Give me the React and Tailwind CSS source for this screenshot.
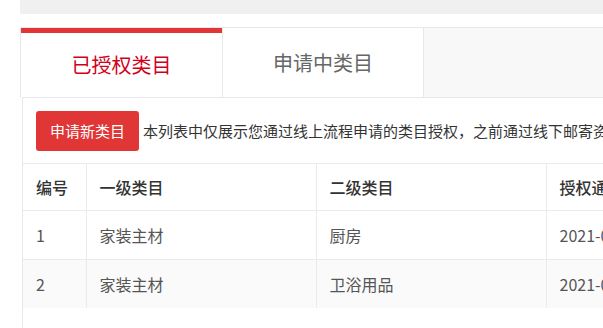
export default function App() {
  const rows = [
    { id: 1, first: '家装主材', second: '厨房', date: '2021-06-18 10:22:31' },
    { id: 2, first: '家装主材', second: '卫浴用品', date: '2021-06-18 10:22:31' },
  ]

  return (
    <div
      className="w-[603px] h-[328px] bg-white overflow-hidden"
      style={{ fontFamily: '"Noto Sans CJK SC", "Noto Sans", sans-serif' }}
    >
      {/* top strip */}
      <div className="ml-[20px] h-[14px] bg-[#f0f0f0]"></div>

      {/* tabs */}
      <div className="ml-[20px] mt-[13px] h-[70px] flex border-t border-l border-[#e8e8e8]">
        <div className="w-[201px] shrink-0 bg-white border-t-[5px] border-[#e23535] flex items-center justify-center text-[20px] text-[#d0021b]">
          已授权类目
        </div>
        <div className="w-[201px] shrink-0 bg-white border-l border-[#e8e8e8] flex items-center justify-center text-[20px] text-[#666]">
          申请中类目
        </div>
        <div className="flex-1 bg-[#f8f8f8] border-l border-[#e8e8e8]"></div>
      </div>

      {/* panel */}
      <div className="ml-[22px] border-t border-l border-[#e8e8e8] bg-white">
        <div className="pl-[13px] pt-[13px] flex items-center">
          <button className="h-[40px] w-[103px] shrink-0 rounded-[3px] bg-[#e03636] text-white text-[15px]">
            申请新类目
          </button>
          <span className="ml-[4px] text-[15px] text-[#333] whitespace-nowrap">
            本列表中仅展示您通过线上流程申请的类目授权，之前通过线下邮寄资料申请的类目授权请联系客服查询
          </span>
        </div>

        <table className="mt-[12px] w-[823px] table-fixed border-collapse text-[16px] whitespace-nowrap">
          <colgroup>
            <col className="w-[63px]" />
            <col className="w-[230px]" />
            <col className="w-[230px]" />
            <col className="w-[300px]" />
          </colgroup>
          <thead>
            <tr className="h-[47px] border-t border-b border-[#ebebeb] text-[#333]">
              <th className="pl-[13px] text-left font-medium">编号</th>
              <th className="pl-[13px] text-left font-medium border-l border-[#ebebeb]">一级类目</th>
              <th className="pl-[13px] text-left font-medium border-l border-[#ebebeb]">二级类目</th>
              <th className="pl-[13px] text-left font-medium border-l border-[#ebebeb]">授权通过时间</th>
            </tr>
          </thead>
          <tbody>
            {rows.map((r, i) => (
              <tr
                key={r.id}
                className={i === 0 ? 'h-[49px] border-b border-[#ebebeb] text-[#555]' : 'h-[48px] bg-[#fafafa] text-[#555]'}
              >
                <td className="pl-[13px]">{r.id}</td>
                <td className="pl-[13px] border-l border-[#ebebeb]">{r.first}</td>
                <td className="pl-[13px] border-l border-[#ebebeb]">{r.second}</td>
                <td className="pl-[13px] border-l border-[#ebebeb]">{r.date}</td>
              </tr>
            ))}
          </tbody>
        </table>
        <div className="h-[30px]"></div>
      </div>
    </div>
  )
}
